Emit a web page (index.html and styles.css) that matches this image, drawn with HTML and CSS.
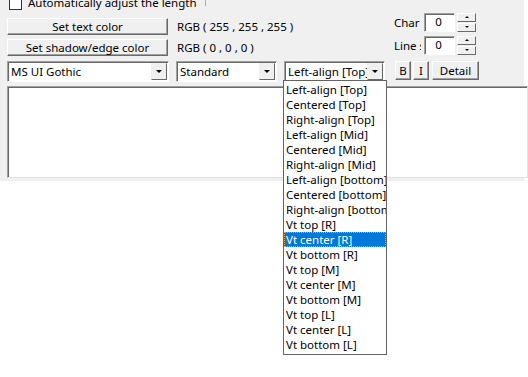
FILE: index.html
```html
<!DOCTYPE html>
<html lang="en">
  <head>
    <meta charset="UTF-8" />
    <title>Text settings</title>
    <link rel="stylesheet" href="styles.css">
  </head>
  <body>
    <div class="page">
      <div class="panel">
        <label class="auto">
          <span class="check"></span>
          Automatically adjust the length
          <span class="tick"></span>
        </label>

        <div class="top">
          <div class="buttons">
            <button class="btn wide">Set text color</button>
            <button class="btn wide">Set shadow/edge color</button>
          </div>
          <div class="rgb">
            <span>RGB ( 255 , 255 , 255 )</span>
            <span>RGB ( 0 , 0 , 0 )</span>
          </div>
          <div class="spins">
            <div class="spin-row">
              <span class="spin-label">Char spacing</span>
              <span class="num">0</span>
              <span class="spinner"><i class="up"></i><i class="down"></i></span>
            </div>
            <div class="spin-row">
              <span class="spin-label">Line spacing</span>
              <span class="num">0</span>
              <span class="spinner"><i class="up"></i><i class="down"></i></span>
            </div>
          </div>
        </div>

        <div class="selects">
          <div class="combo font">MS UI Gothic<span class="arrow"></span></div>
          <div class="combo style">Standard<span class="arrow"></span></div>
          <div class="combo align">Left-align [Top]<span class="arrow"></span></div>
          <div class="toggles">
            <button class="btn small">B</button>
            <button class="btn small">I</button>
            <button class="btn detail">Detail</button>
          </div>
        </div>

        <div class="text-box"></div>
      </div>

      <ul class="dropdown">
        <li>Left-align [Top]</li>
        <li>Centered [Top]</li>
        <li>Right-align [Top]</li>
        <li>Left-align [Mid]</li>
        <li>Centered [Mid]</li>
        <li>Right-align [Mid]</li>
        <li>Left-align [bottom]</li>
        <li>Centered [bottom]</li>
        <li>Right-align [bottom]</li>
        <li>Vt top [R]</li>
        <li class="selected">Vt center [R]</li>
        <li>Vt bottom [R]</li>
        <li>Vt top [M]</li>
        <li>Vt center [M]</li>
        <li>Vt bottom [M]</li>
        <li>Vt top [L]</li>
        <li>Vt center [L]</li>
        <li>Vt bottom [L]</li>
      </ul>
    </div>
  </body>
</html>
```

FILE: styles.css
```css
body {
  margin: 0;
  background: #fff;
  font-family: "Noto Sans", "Open Sans", Arial, sans-serif;
  font-size: 11.5px;
  color: #000;
}
.page {
  position: relative;
  min-height: 377px;
}
.panel {
  width: 524px;
  height: 184px;
  background: #f0f0f0;
  box-sizing: border-box;
  padding: 0 0 0 7px;
}
.auto {
  display: flex;
  align-items: center;
  gap: 6px;
  height: 12px;
  margin-top: -3px;
  padding-left: 2px;
  line-height: 12px;
}
.check {
  width: 11px;
  height: 11px;
  border: 1px solid #333;
  background: #fff;
}
.tick {
  width: 1px;
  height: 6px;
  background: #f0a040;
  margin-left: 2px;
}
.top {
  display: flex;
  margin-top: 7px;
  height: 42px;
}
.buttons {
  display: flex;
  flex-direction: column;
  gap: 4px;
  padding-top: 2px;
}
.btn {
  font: inherit;
  color: #000;
  background: #f0f0f0;
  border: 1px solid;
  border-color: #fff #696969 #696969 #fff;
  box-shadow: inset -1px -1px #a0a0a0;
  padding: 0;
  line-height: 14px;
}
.wide {
  width: 161px;
  height: 17px;
}
.rgb {
  display: flex;
  flex-direction: column;
  gap: 6px;
  margin-left: 9px;
  padding-top: 3px;
  width: 217px;
  line-height: 15px;
}
.spins {
  display: flex;
  flex-direction: column;
  gap: 4px;
  margin-top: -3px;
}
.spin-row {
  display: flex;
  align-items: center;
  height: 19px;
}
.spin-label {
  width: 27px;
  margin-right: 3px;
  overflow: hidden;
  white-space: nowrap;
}
.num {
  width: 31px;
  height: 19px;
  box-sizing: border-box;
  background: #fff;
  border: 1px solid;
  border-color: #a0a0a0 #fff #fff #a0a0a0;
  box-shadow: inset 1px 1px #696969;
  text-align: center;
  line-height: 16px;
  padding-right: 2px;
}
.spinner {
  display: flex;
  flex-direction: column;
  gap: 1px;
  margin-left: 2px;
}
.spinner i {
  position: relative;
  width: 19px;
  height: 9px;
  box-sizing: border-box;
  background: #f0f0f0;
  border: 1px solid;
  border-color: #fff #696969 #696969 #fff;
}
.spinner i::after {
  content: "";
  position: absolute;
  left: 7px;
  top: 2px;
  border-left: 2px solid transparent;
  border-right: 2px solid transparent;
}
.spinner .up::after {
  border-bottom: 2px solid #000;
}
.spinner .down::after {
  border-top: 2px solid #000;
}
.selects {
  display: flex;
  align-items: flex-start;
  margin-top: 3px;
  height: 21px;
}
.combo {
  position: relative;
  height: 21px;
  box-sizing: border-box;
  background: #fff;
  border: 1px solid;
  border-color: #a0a0a0 #fff #fff #a0a0a0;
  box-shadow: inset 1px 1px #696969;
  padding-left: 3px;
  line-height: 19px;
  white-space: nowrap;
  overflow: hidden;
}
.font {
  width: 162px;
}
.style {
  width: 101px;
  margin-left: 7px;
}
.align {
  width: 101px;
  margin-left: 7px;
}
.arrow {
  position: absolute;
  right: 1px;
  top: 1px;
  width: 16px;
  height: 17px;
  background: #f0f0f0;
  border: 1px solid;
  border-color: #f0f0f0 #696969 #696969 #f0f0f0;
  box-sizing: border-box;
}
.arrow::after {
  content: "";
  position: absolute;
  left: 4px;
  top: 6px;
  border-left: 3px solid transparent;
  border-right: 3px solid transparent;
  border-top: 3px solid #000;
}
.toggles {
  display: flex;
  gap: 2px;
  margin-left: 10px;
}
.small {
  width: 16px;
  height: 19px;
}
.detail {
  width: 47px;
  height: 19px;
  margin-left: 1px;
}
.text-box {
  width: 521px;
  height: 92px;
  margin-top: 4px;
  box-sizing: border-box;
  background: #fff;
  border: 1px solid;
  border-color: #a0a0a0 #e3e3e3 #e3e3e3 #a0a0a0;
  box-shadow: inset 1px 1px #696969;
}
.dropdown {
  position: absolute;
  left: 283px;
  top: 83px;
  width: 104px;
  margin: 0;
  padding: 1px 0 2px;
  list-style: none;
  background: #fff;
  border: 1px solid #646464;
  box-sizing: border-box;
}
.dropdown li {
  height: 15px;
  line-height: 15px;
  padding-left: 2px;
  white-space: nowrap;
  overflow: hidden;
}
.dropdown .selected {
  background: #0078d7;
  color: #fff;
  outline: 1px dotted #f0a040;
  outline-offset: -1px;
}
```
